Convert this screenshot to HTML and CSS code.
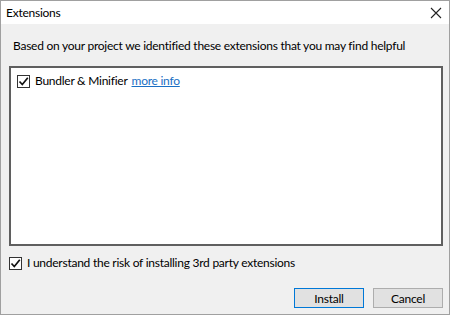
FILE: index.html
```html
<!DOCTYPE html>
<html lang="en">

<head>
    <meta charset="UTF-8">
    <title>Extensions</title>
    <link rel="stylesheet" href="styles.css">
</head>

<body>
    <div class="dialog">
        <div class="titlebar">
            <span class="title">Extensions</span>
            <svg class="close" width="12" height="12" viewBox="0 0 12 12">
                <path d="M1 1 L11 11 M11 1 L1 11" stroke="#222" stroke-width="1.1" fill="none" />
            </svg>
        </div>

        <div class="content">
            <p class="intro">Based on your project we identified these extensions that you may find helpful</p>

            <div class="ext-list">
                <label class="check-row">
                    <span class="box">
                        <svg width="11" height="11" viewBox="0 0 11 11">
                            <path d="M1.5 5.5 L4.3 8.5 L9.8 1.8" stroke="#111" stroke-width="1.7" fill="none" />
                        </svg>
                    </span>
                    <span>Bundler &amp; Minifier</span>
                    <a href="#" class="more-info">more info</a>
                </label>
            </div>

            <label class="check-row risk">
                <span class="box">
                    <svg width="11" height="11" viewBox="0 0 11 11">
                        <path d="M1.5 5.5 L4.3 8.5 L9.8 1.8" stroke="#111" stroke-width="1.7" fill="none" />
                    </svg>
                </span>
                <span>I understand the risk of installing 3rd party extensions</span>
            </label>

            <div class="buttons">
                <button class="btn default">Install</button>
                <button class="btn">Cancel</button>
            </div>
        </div>
    </div>
</body>

</html>
```

FILE: styles.css
```css
body {
    margin: 0;
    padding: 0;
    font-family: "Lato", "Noto Sans", sans-serif;
    font-size: 12px;
    letter-spacing: -0.25px;
    color: #000;
    background-color: white;
}

.dialog {
    width: 450px;
    height: 315px;
    box-sizing: border-box;
    border: 1px solid #a0a0a0;
    display: flex;
    flex-direction: column;
    background-color: #f0f0f0;
}

.titlebar {
    height: 23px;
    background-color: white;
    display: flex;
    align-items: center;
    justify-content: space-between;
    padding: 0 7px 0 5px;
}

.close {
    display: block;
}

.content {
    flex: 1;
    display: flex;
    flex-direction: column;
    padding: 0 6px 6px 8px;
}

.intro {
    margin: 14px 0 0 4px;
    line-height: 16px;
    white-space: nowrap;
}

.ext-list {
    box-sizing: border-box;
    margin-top: 12px;
    height: 180px;
    background-color: white;
    border: 2px solid #5f5f5f;
    padding: 5px 6px;
}

.check-row {
    display: flex;
    align-items: center;
    gap: 5px;
    line-height: 16px;
}

.box {
    width: 11px;
    height: 11px;
    border: 1px solid #333;
    background-color: white;
    display: flex;
    align-items: center;
    justify-content: center;
}

.more-info {
    color: #1a6fc4;
    margin-left: -1px;
}

.risk {
    margin-top: 9px;
}

.buttons {
    margin-top: auto;
    display: flex;
    justify-content: flex-end;
    gap: 9px;
}

.btn {
    width: 70px;
    height: 20px;
    font-family: "Lato", "Noto Sans", sans-serif;
    font-size: 12px;
    letter-spacing: -0.25px;
    background-color: #e1e1e1;
    border: 1px solid #adadad;
    padding: 0;
}

.btn.default {
    border-color: #0078d7;
}
```
